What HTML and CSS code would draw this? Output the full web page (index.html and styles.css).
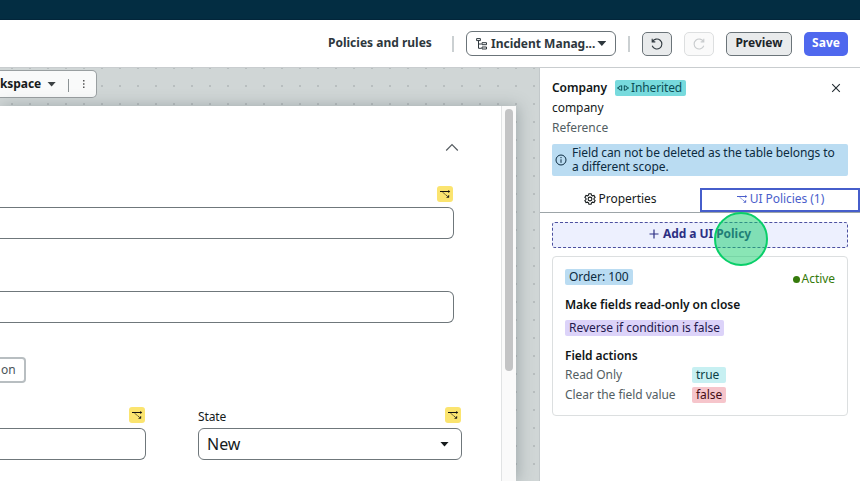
FILE: index.html
```html
<!DOCTYPE html>
<html lang="en">
<head>
<meta charset="utf-8">
<title>Table builder</title>
<link rel="stylesheet" href="styles.css">
</head>
<body>
<svg class="defs" aria-hidden="true">
  <symbol id="policy" viewBox="0 0 12 12">
    <path d="M1 3.500H10" fill="none" stroke="currentColor" stroke-width="1"/>
    <path d="M9.200 2L11.200 3.500L9.200 5Z" fill="currentColor"/>
    <path d="M3.600 4.200L8.400 8.200" fill="none" stroke="currentColor" stroke-width="1" stroke-dasharray="1.300 1.100"/>
    <path d="M9.900 7.200V9.500H7.600Z" fill="currentColor" stroke="currentColor" stroke-width=".4"/>
  </symbol>
  <symbol id="rotate" viewBox="0 0 14 14">
    <path d="M2.200 1.800V4.900H5.300M2.400 4.800A5 5 0 1 1 2.200 8.800" fill="none" stroke="currentColor" stroke-width="1.100"/>
  </symbol>
</svg>
<div class="app">
  <header class="top"></header>
  <nav class="toolbar">
    <span class="rules">Policies and rules</span>
    <i class="divider d1"></i>
    <button class="table-select">
      <svg width="12" height="12" viewBox="0 0 12 12" fill="none" stroke="currentColor"><path d="M.6.6h3.800v2H.6zM2.500 2.600V10.300h3M2.500 6h3M6 4.700h4.500v2H6zM6 9h4.500v2H6z"/></svg>
      <span>Incident Manag...</span><i class="caret"></i>
    </button>
    <i class="divider d2"></i>
    <button class="icon-btn"><svg width="14" height="14"><use href="#rotate"/></svg></button>
    <button class="icon-btn disabled"><svg class="flip" width="14" height="14"><use href="#rotate"/></svg></button>
    <button class="preview">Preview</button>
    <button class="save">Save</button>
  </nav>
  <main class="main">
    <section class="canvas">
      <div class="view-tab"><span>kspace</span><i class="caret"></i><i class="tab-line"></i><svg width="4" height="10" fill="#555"><path d="M1 1h1.500v1.500H1zM1 4.200h1.500v1.500H1zM1 7.400h1.500v1.500H1z"/></svg></div>
      <div class="sheet">
        <div class="form">
          <svg class="chevron" width="14" height="9" viewBox="0 0 14 9" fill="none" stroke="#555b60" stroke-width="1.200"><path d="M1.200 7.500L7 1.600L12.800 7.500"/></svg>
          <span class="badge"><svg width="12" height="12"><use href="#policy"/></svg></span>
          <div class="input"></div>
          <div class="input second"></div>
          <button class="form-btn">on</button>
          <div class="row">
            <div class="left-field"><span class="badge"><svg width="12" height="12"><use href="#policy"/></svg></span><div class="input"></div></div>
            <div class="state-field">
              <div class="label"><span>State</span><span class="badge"><svg width="12" height="12"><use href="#policy"/></svg></span></div>
              <div class="input select"><span>New</span><i class="caret"></i></div>
            </div>
          </div>
        </div>
        <div class="scroll"><div class="thumb"></div></div>
      </div>
    </section>
    <aside class="panel">
      <div class="head">
        <strong>Company</strong>
        <span class="tag inherited"><svg width="12" height="8" viewBox="0 0 12 8" fill="none" stroke="currentColor" stroke-width="1"><path d="M0 4h1.700M4.700 1.500v5M4.700 2H3.600a2 2 0 0 0 0 4h1.100M7.300 1.500v5M7.300 2h1a2 2 0 0 1 0 4h-1M10.300 4H12"/></svg>Inherited</span>
        <svg class="close" width="10" height="10" viewBox="0 0 10 10" stroke="#222b31" stroke-width="1.100"><path d="M1.200 1.200l7.600 7.600M8.800 1.200L1.200 8.800"/></svg>
      </div>
      <div class="name">company</div>
      <div class="type">Reference</div>
      <div class="notice">
        <svg width="12" height="12" viewBox="0 0 12 12" fill="none" stroke="currentColor"><circle cx="6" cy="6" r="5"/><path d="M6 5.300v3.500M6 3v1.200"/></svg>
        <span>Field can not be deleted as the table belongs to<br>a different scope.</span>
      </div>
      <div class="tabs">
        <div class="tab"><svg width="12" height="12" viewBox="0 0 12 12" fill="none" stroke="currentColor" stroke-width="1.100"><path d="M4.900.7h2.200l.4 1.500 1 .6 1.500-.4 1.100 1.900L10 5.400v1.200l1.100 1.100L10 9.600l-1.500-.4-1 .6-.4 1.500H4.900l-.4-1.500-1-.6-1.500.4L.9 7.700 2 6.600V5.400L.9 4.300 2 2.400l1.500.4 1-.6z"/><circle cx="6" cy="6" r="1.900"/></svg>Properties</div>
        <div class="tab active"><svg width="12" height="12"><use href="#policy"/></svg>UI Policies (1)</div>
      </div>
      <div class="add-wrap">
        <button class="add"><svg width="10" height="10" viewBox="0 0 10 10" stroke="currentColor" stroke-width="1.200"><path d="M5 .5v9M.5 5h9"/></svg>Add a UI Policy</button>
        <span class="click"></span>
      </div>
      <article class="card">
        <div class="card-top"><span class="tag order">Order: 100</span><span class="status"><i></i>Active</span></div>
        <h3>Make fields read-only on close</h3>
        <span class="tag reverse">Reverse if condition is false</span>
        <h3 class="actions">Field actions</h3>
        <dl>
          <dt>Read Only</dt><dd><span class="tag true">true</span></dd>
          <dt>Clear the field value</dt><dd><span class="tag false">false</span></dd>
        </dl>
      </article>
    </aside>
  </main>
</div>
</body>
</html>
```
FILE: styles.css
```css
* { box-sizing: border-box; }
body { margin: 0; font: 12px/16px "Noto Sans", sans-serif; color: #161b1c; background: #fff; }
button { font: inherit; color: inherit; letter-spacing: inherit; margin: 0; padding: 0; }
svg { display: block; flex: none; }
.defs { display: none; }
.app { width: 860px; height: 481px; display: flex; flex-direction: column; overflow: hidden; }
.top { height: 20px; flex: none; background: #032d42; border-bottom: 1px solid #02253a; }
.toolbar { height: 48px; flex: none; display: flex; align-items: center; justify-content: flex-end; padding-right: 12px; border-bottom: 1px solid #c9cdcf; font-weight: 700; color: #2e373d; }
.rules { width: 105px; white-space: nowrap; margin-bottom: 2px; }
.divider { width: 2px; height: 16px; background: #cbd0d2; }
.d1 { margin: 0 12px 0 19px; }
.d2 { margin: 0 12px 0 12px; }
.table-select { width: 150px; height: 25px; display: flex; align-items: center; border: 1px solid #6b7479; border-radius: 6px; background: #fff; padding: 0 9px; font-weight: 700; white-space: nowrap; }
.table-select span { margin-left: 3px; }
.table-select .caret { margin-left: 2px; }
.caret { flex: none; width: 9px; height: 5px; background: currentColor; clip-path: polygon(0 0, 100% 0, 50% 100%); }
.icon-btn { width: 30px; height: 24px; display: flex; align-items: center; justify-content: center; border: 1px solid #6b7479; border-radius: 5px; background: #e9ebec; margin-right: 12px; }
.disabled { color: #c8cbcd; border-color: #dddfe0; background: #fafafa; }
.flip { transform: scaleX(-1); }
.preview, .save { height: 24px; border-radius: 5px; font-weight: 700; padding-bottom: 2px; }
.preview { width: 66px; border: 1px solid #6b7479; background: #e9ebec; margin-right: 12px; color: #1d2529; }
.save { width: 44px; border: 0; background: #4f68ee; color: #fff; }
.main { flex: 1; min-height: 0; display: grid; grid-template-columns: 540px 320px; }
.canvas { min-height: 0; overflow: hidden; display: flex; flex-direction: column; align-items: flex-start; background: radial-gradient(circle at 9px 9px, #b8bebf 0, #b8bebf .8px, transparent 1.300px) 3px 9px / 18px 18px, #d0d6d6; }
.view-tab { width: 97px; height: 28px; flex: none; margin-top: 2px; display: flex; align-items: center; background: #f9fafa; border: 1px solid #999fa1; border-left: 0; border-radius: 0 5px 5px 0; font-weight: 700; letter-spacing: -.08px; }
.view-tab .caret { margin-left: 6px; color: #3b4143; }
.tab-line { width: 1px; height: 13px; background: #8c9395; margin: 2px 13px 0 12px; }
.sheet { width: 516px; height: 375px; margin-top: 8px; flex: none; display: flex; background: #fff; box-shadow: 2px 0 14px rgba(70, 85, 90, .34); }
.form { width: 501px; display: flex; flex-direction: column; align-items: flex-start; }
.chevron { margin: 37px 0 0 445px; }
.badge { width: 16px; height: 16px; flex: none; display: flex; align-items: center; justify-content: center; border-radius: 3px; background: #fbe46f; color: #111; }
.form > .badge { margin: 34px 0 5px 437px; }
.input { width: 454px; height: 32px; flex: none; border: 1px solid #6f777b; border-left: 0; border-radius: 0 6px 6px 0; background: #fff; }
.second { margin-top: 52px; }
.form-btn { width: 26px; height: 26px; margin-top: 34px; background: #fff; border: 2px solid #b8bec1; border-left: 0; border-radius: 0 4px 4px 0; text-align: left; padding-left: 1px; color: #4a5459; }
.row { display: flex; gap: 52px; margin-top: 24px; }
.left-field { width: 146px; }
.left-field .badge { margin: 0 0 5px 129px; }
.left-field .input { width: 146px; }
.state-field { width: 264px; }
.label { height: 21px; display: flex; justify-content: space-between; padding-right: 1px; line-height: 19px; letter-spacing: -.1px; }
.select { width: 264px; border-left: 1px solid #6f777b; border-radius: 6px; display: flex; align-items: center; justify-content: space-between; padding: 0 12px 0 8px; font-size: 16px; }
.scroll { width: 15px; background: #fafafa; border-left: 1px solid #e1e3e4; padding: 3px; }
.thumb { width: 8px; height: 262px; border-radius: 4px; background: #c3c4c5; }
.panel { background: #fff; border-left: 1px solid #c2c8ca; margin-left: -1px; z-index: 1; letter-spacing: -.05px; }
.head { display: flex; align-items: center; height: 16px; margin: 12px 19px 0 12px; }
.head strong, h3 { font-weight: 600; color: #101516; }
.tag { display: inline-block; height: 16px; line-height: 16px; border-radius: 2px; padding: 0 4px; }
.inherited { display: flex; align-items: center; gap: 2px; background: #77dadd; color: #0b4d55; margin-left: 8px; padding: 0 4px 0 2px; width: 71px; white-space: nowrap; letter-spacing: -.12px; }
.close { margin-left: auto; }
.name, .type { margin: 4px 12px 0; }
.type { color: #535e63; }
.notice { height: 32px; margin: 8px 12px 0; display: flex; align-items: center; gap: 5px; padding-left: 3px; background: #badcf2; border-radius: 2px; line-height: 14px; letter-spacing: -.07px; color: #0c2b40; white-space: nowrap; }
.tabs { display: grid; grid-template-columns: 160px 160px; height: 25px; margin-top: 12px; border-bottom: 1px solid #9da5a8; }
.tab { height: 24px; display: flex; align-items: center; justify-content: center; gap: 3px; padding-bottom: 2px; }
.active { border: 2px solid #465ecb; color: #4a5ecb; padding: 0; padding-bottom: 2px; gap: 2px; }
.add-wrap { position: relative; margin: 9px 12px 0; }
.add { width: 296px; height: 26px; display: flex; align-items: center; justify-content: center; gap: 4px; border: 1px dashed #4c509f; border-radius: 3px; background: #edf0fe; color: #2c2f83; font-weight: 700; padding-bottom: 2px; }
.click { position: absolute; left: 162px; top: -10px; width: 54px; height: 54px; border: 2px solid #09cf69; border-radius: 50%; background: rgba(19, 206, 107, .5); }
.card { height: 160px; margin: 8px 12px 0; border: 1px solid #dcdfe0; border-radius: 4px; padding: 12px; }
.card-top { display: flex; justify-content: space-between; height: 16px; }
.order { background: #badcf2; color: #0c2b40; }
.status { display: flex; align-items: center; gap: 2px; color: #357a0b; height: 20px; }
.status i { width: 7px; height: 7px; border-radius: 50%; background: #357a0b; }
h3 { font-size: 12px; line-height: 16px; margin: 12px 0 7px; }
.reverse { display: block; width: 159px; white-space: nowrap; background: #dcd3f9; color: #24194d; }
h3.actions { margin: 12px 0 3px; }
dl { display: grid; grid-template-columns: 127px 34px; row-gap: 4px; margin: 0; }
dt { color: #535e63; }
dd { margin: 0; height: 16px; }
dd .tag { display: block; width: 34px; }
.true { background: #c7f0f2; color: #0b3f46; }
.false { background: #f6c5cb; color: #460d15; }
```
